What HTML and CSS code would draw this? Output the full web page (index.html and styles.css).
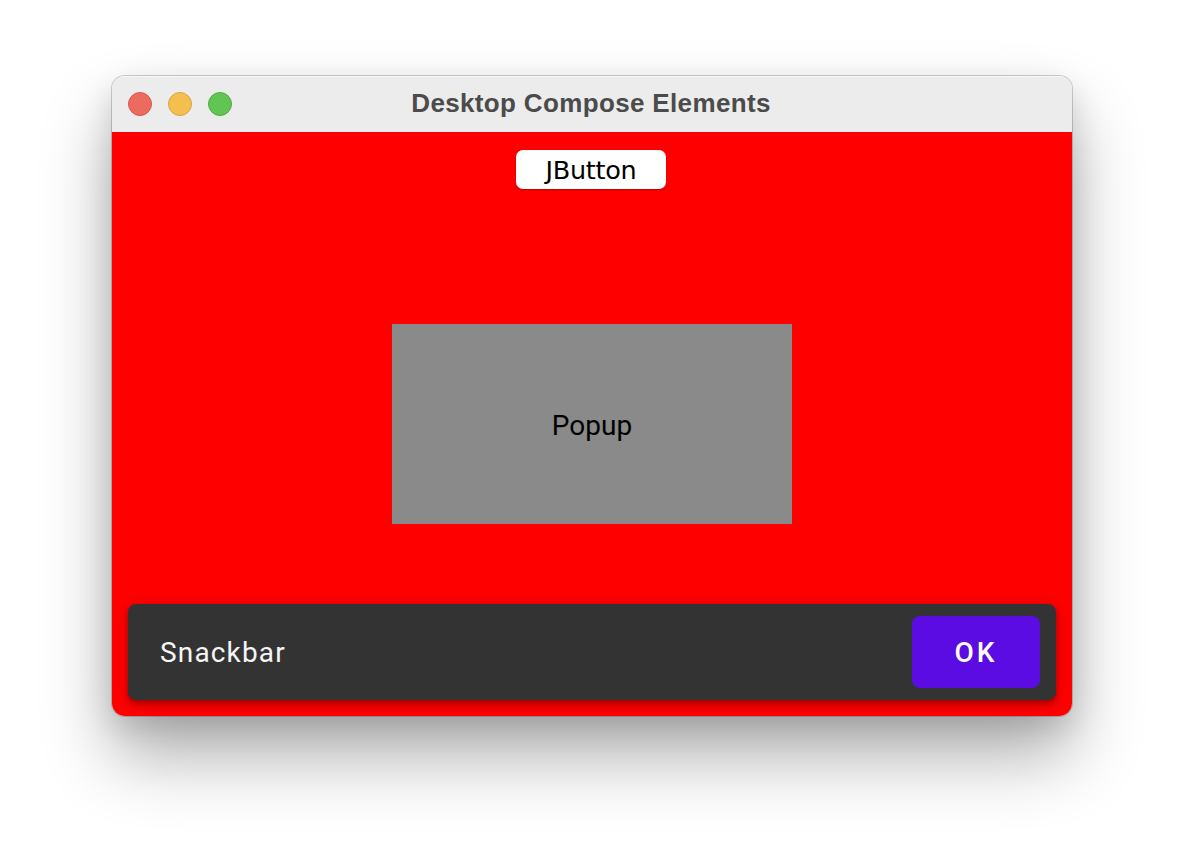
FILE: index.html
```html
<!DOCTYPE html>
<html>
<head>
<meta charset="utf-8">
<link rel="stylesheet" href="styles.css">
</head>
<body>
<div class="window">
  <div class="titlebar">
    <div class="lights">
      <span class="light red"></span>
      <span class="light yellow"></span>
      <span class="light green"></span>
    </div>
    <div class="title">Desktop Compose Elements</div>
  </div>
  <div class="content">
    <div class="jbutton">JButton</div>
    <div class="popup">Popup</div>
    <div class="snackbar">
      <span class="snack-text">Snackbar</span>
      <div class="ok">OK</div>
    </div>
  </div>
</div>
</body>
</html>
```

FILE: styles.css
```css
html, body {
  margin: 0;
  padding: 0;
  background: #ffffff;
}
body {
  width: 1184px;
  height: 864px;
  padding-top: 76px;
  box-sizing: border-box;
  display: flex;
  justify-content: center;
  align-items: flex-start;
  overflow: hidden;
}
.window {
  width: 960px;
  height: 640px;
  border-radius: 13px;
  overflow: hidden;
  display: flex;
  flex-direction: column;
  box-shadow: 0 0 0 1px rgba(0,0,0,0.18), 0 40px 70px rgba(0,0,0,0.32), 0 10px 30px rgba(0,0,0,0.12);
}
.titlebar {
  height: 56px;
  flex: none;
  background: #ececec;
  position: relative;
  display: flex;
  align-items: center;
  justify-content: center;
  box-shadow: inset 0 1px 0 rgba(255,255,255,0.6);
}
.lights {
  position: absolute;
  left: 16px;
  top: 16px;
  display: flex;
  gap: 16px;
}
.light {
  width: 24px;
  height: 24px;
  border-radius: 50%;
  box-sizing: border-box;
}
.red { background: #ed6a5e; border: 1px solid #d5594d; }
.yellow { background: #f5bf4f; border: 1px solid #d9a441; }
.green { background: #61c554; border: 1px solid #52a944; }
.title {
  font-family: "Liberation Sans", Arial, sans-serif;
  font-weight: 700;
  font-size: 26px;
  color: #4b4b4b;
  letter-spacing: 0.35px;
  margin-left: -2px;
  margin-top: -2px;
}
.content {
  flex: 1;
  background: #ff0000;
  position: relative;
  display: flex;
  flex-direction: column;
  align-items: center;
}
.jbutton {
  margin-top: 18px;
  margin-left: -2px;
  width: 150px;
  height: 39px;
  background: #ffffff;
  border-radius: 7px;
  box-shadow: 0 1px 2px rgba(0,0,0,0.25);
  display: flex;
  align-items: center;
  justify-content: center;
  font-family: "DejaVu Sans", sans-serif;
  font-size: 25.5px;
  color: #000;
  letter-spacing: -0.3px;
}
.popup {
  position: absolute;
  left: 280px;
  top: 192px;
  width: 400px;
  height: 200px;
  background: #8a8a8a;
  display: flex;
  align-items: center;
  justify-content: center;
  font-family: Roboto, sans-serif;
  font-size: 28px;
  color: #000;
  padding-top: 2px;
  box-sizing: border-box;
}
.snackbar {
  margin-top: auto;
  margin-bottom: 16px;
  align-self: stretch;
  margin-left: 16px;
  margin-right: 16px;
  height: 96px;
  background: #333333;
  border-radius: 8px;
  box-shadow: 0 6px 10px rgba(0,0,0,0.14), 0 1px 18px rgba(0,0,0,0.12), 0 3px 5px rgba(0,0,0,0.2);
  display: flex;
  align-items: center;
  justify-content: space-between;
  padding: 0 16px 0 32px;
}
.snack-text {
  font-family: Roboto, sans-serif;
  font-size: 28px;
  color: #f6f6f6;
  letter-spacing: 1.15px;
}
.ok {
  width: 128px;
  height: 72px;
  background: #5a0ce3;
  border-radius: 8px;
  display: flex;
  align-items: center;
  justify-content: center;
  font-family: Roboto, sans-serif;
  font-weight: 500;
  font-size: 28px;
  letter-spacing: 3px;
  color: #ffffff;
  padding-left: 0;
  box-sizing: border-box;
}
```
